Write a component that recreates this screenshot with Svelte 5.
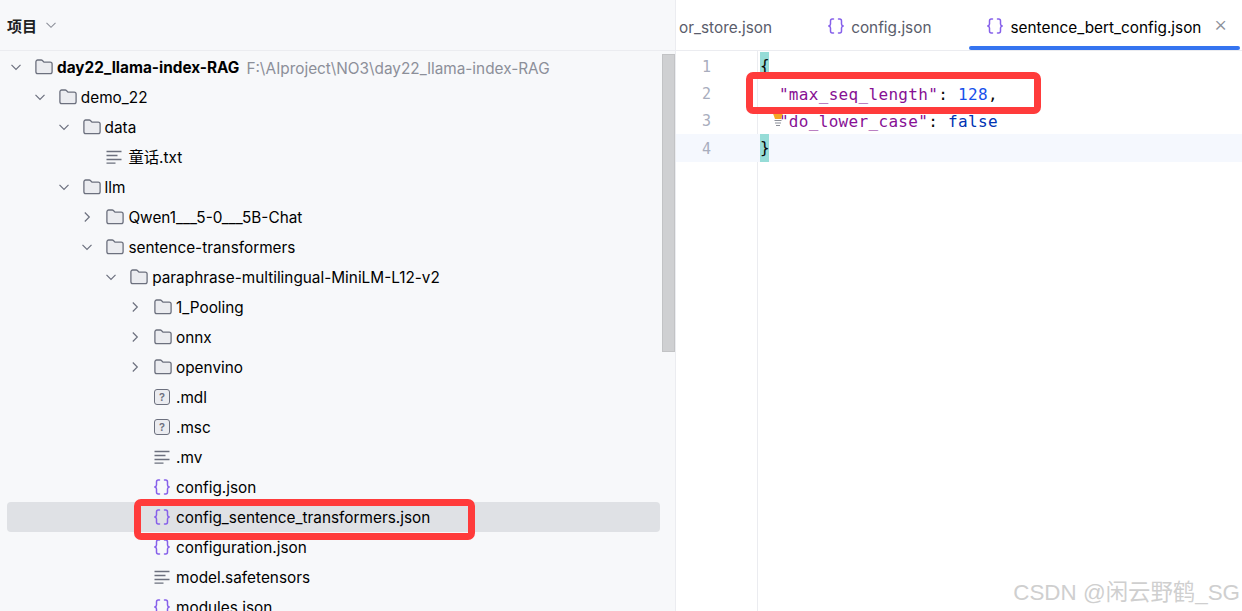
<script>
  const rows = [
    { l: 0, k: 'open', icon: 'folder', t: 'day22_llama-index-RAG', bold: true, hint: 'F:\\AIproject\\NO3\\day22_llama-index-RAG' },
    { l: 1, k: 'open', icon: 'folder', t: 'demo_22' },
    { l: 2, k: 'open', icon: 'folder', t: 'data' },
    { l: 3, icon: 'text', t: '童话.txt' },
    { l: 2, k: 'open', icon: 'folder', t: 'llm' },
    { l: 3, k: 'closed', icon: 'folder', t: 'Qwen1___5-0___5B-Chat' },
    { l: 3, k: 'open', icon: 'folder', t: 'sentence-transformers' },
    { l: 4, k: 'open', icon: 'folder', t: 'paraphrase-multilingual-MiniLM-L12-v2' },
    { l: 5, k: 'closed', icon: 'folder', t: '1_Pooling' },
    { l: 5, k: 'closed', icon: 'folder', t: 'onnx' },
    { l: 5, k: 'closed', icon: 'folder', t: 'openvino' },
    { l: 5, icon: 'unknown', t: '.mdl' },
    { l: 5, icon: 'unknown', t: '.msc' },
    { l: 5, icon: 'text', t: '.mv' },
    { l: 5, icon: 'json', t: 'config.json' },
    { l: 5, icon: 'json', t: 'config_sentence_transformers.json', sel: true },
    { l: 5, icon: 'json', t: 'configuration.json' },
    { l: 5, icon: 'text', t: 'model.safetensors' },
    { l: 5, icon: 'json', t: 'modules.json' }
  ];
</script>

{#snippet braces()}
  <svg class="ico" viewBox="0 0 16 16" fill="none" stroke="#8660ea" stroke-width="1.500" stroke-linecap="round" stroke-linejoin="round">
    <path d="M5.500 1H4.300C3 1 2.500 1.800 2.500 3v3C2.500 7 1.800 7.700.8 8c1 .3 1.700 1 1.700 2v3c0 1.200.5 2 1.800 2h1.200" />
    <path d="M10.500 1h1.200C13 1 13.500 1.800 13.500 3v3c0 1 .7 1.700 1.700 2-1 .3-1.700 1-1.700 2v3c0 1.200-.5 2-1.800 2h-1.200" />
  </svg>
{/snippet}

<div class="app">
  <aside class="side">
    <header class="side-head">
      <span class="title">项目</span>
      <svg class="head-chev" viewBox="0 0 12 12" fill="none" stroke="#8c8f99" stroke-width="1.100"><path d="M1.500 3.800 6 8.300l4.500-4.500" /></svg>
    </header>
    <div class="tree">
      {#each rows as r}
        <div class="row" class:sel={r.sel} style="--l:{r.l}">
          <span class="chev">
            {#if r.k === 'open'}
              <svg viewBox="0 0 12 12" fill="none" stroke="#6c707e" stroke-width="1.200"><path d="M1.500 3.800 6 8.300l4.500-4.500" /></svg>
            {:else if r.k === 'closed'}
              <svg viewBox="0 0 12 12" fill="none" stroke="#6c707e" stroke-width="1.200"><path d="M3.800 1.500 8.300 6l-4.500 4.500" /></svg>
            {/if}
          </span>
          {#if r.icon === 'folder'}
            <svg class="ico folder" viewBox="0 0 18 16" fill="#ebecf0" stroke="#6c707e" stroke-width="1.300"><path d="M.9 3C.9 1.900 1.600 1 2.700 1h3.500c.5 0 .9.200 1.200.5L9 3.200h6.200c1.100 0 1.900.8 1.900 1.900v7.700c0 1.100-.8 1.900-1.900 1.900H2.800C1.700 14.700.9 13.900.9 12.800z" /></svg>
          {:else if r.icon === 'text'}
            <svg class="ico" viewBox="0 0 16 16" fill="none" stroke="#6c707e" stroke-width="1.300"><path d="M.5 2.500h15M.5 6.500h11M.5 10.500h15M.5 14.200h9" /></svg>
          {:else if r.icon === 'unknown'}
            <span class="unk">?</span>
          {:else}
            {@render braces()}
          {/if}
          <span class="name" class:bold={r.bold}>{r.t}</span>
          {#if r.hint}<span class="hint">{r.hint}</span>{/if}
        </div>
      {/each}
    </div>
    <div class="scroll"></div>
  </aside>

  <main class="main">
    <nav class="tabs">
      <div class="tab first">or_store.json</div>
      <div class="tab">{@render braces()}config.json</div>
      <div class="tab active">{@render braces()}sentence_bert_config.json<span class="close">×</span></div>
    </nav>
    <div class="code">
      <div class="line"><span class="no">1</span><span class="src"><span class="brace">{'{'}</span></span></div>
      <div class="line"><span class="no">2</span><span class="src txt">{'  '}<span class="key">"max_seq_length"</span>: <span class="num">128</span>,</span></div>
      <div class="line"><span class="no">3</span><span class="src txt">{'  '}<span class="key">"do_lower_case"</span>: <span class="lit">false</span></span></div>
      <div class="line cur"><span class="no">4</span><span class="src"><span class="brace">{'}'}</span></span></div>
      <svg class="bulb" viewBox="0 0 14 16"><path d="M1.500 0h11l-2.500 7H4z" fill="#f5a623" /><path d="M3.500 8.500h7M4 11h6M5 13.500h4" stroke="#8c8f99" stroke-width="1.200" /></svg>
    </div>
  </main>

  <div class="mark mark-a"></div>
  <div class="mark mark-b"></div>
  <div class="wm">CSDN @闲云野鹤_SG</div>
</div>

<style>
  :global(body) { margin: 0; }
  .app {
    position: relative;
    display: flex;
    width: 1242px;
    height: 611px;
    overflow: hidden;
    background: #fff;
    color: #000;
    font-family: Inter, "Noto Sans CJK SC", sans-serif;
    font-size: 15.350px;
  }
  .side {
    position: relative;
    flex: 0 0 675px;
    background: #f7f8fa;
    border-right: 1px solid #ebecf0;
    overflow: hidden;
  }
  .side-head {
    display: flex;
    align-items: center;
    gap: 8px;
    height: 50px;
    padding-left: 7px;
    border-bottom: 1px solid #ebecf0;
    box-sizing: content-box;
  }
  .title { font-size: 15px; font-weight: 600; color: #1e1f22; }
  .head-chev { width: 12px; height: 12px; }
  .tree { padding-top: 1px; }
  .row {
    display: flex;
    align-items: center;
    height: 30px;
    margin: 0 15px 0 7px;
    padding-left: calc(var(--l) * 23.800px + 3px);
    border-radius: 4px;
    white-space: nowrap;
  }
  .row.sel { background: #dfe1e5; }
  .chev { display: flex; flex: 0 0 12px; width: 12px; height: 12px; margin-right: 13px; }
  .ico { flex: 0 0 auto; width: 16px; height: 16px; margin-right: 6px; }
  .ico.folder { width: 18px; margin-right: 4px; }
  .unk {
    flex: 0 0 auto;
    display: flex;
    align-items: center;
    justify-content: center;
    box-sizing: border-box;
    width: 16px;
    height: 16px;
    margin-right: 6px;
    border: 1.500px solid #6c707e;
    border-radius: 3px;
    background: #ebecf0;
    color: #6c707e;
    font-size: 11px;
    font-weight: 600;
  }
  .name { color: #000; line-height: 20px; height: 20px; margin-top: 2px; }
  .bold { font-weight: 700; }
  .hint { margin-left: 7px; margin-top: 2px; color: #8c8f99; }
  .scroll {
    position: absolute;
    top: 54px;
    right: 0;
    width: 13px;
    height: 298px;
    box-sizing: border-box;
    background: #cfd0d2;
    border: 1px solid #c2c3c5;
  }
  .main { flex: 1; min-width: 0; display: flex; flex-direction: column; }
  .tabs {
    display: flex;
    height: 50px;
    flex: 0 0 50px;
    border-bottom: 1px solid #ebecf0;
    overflow: hidden;
    box-sizing: content-box;
  }
  .tab {
    flex: 0 0 auto;
    position: relative;
    display: flex;
    align-items: center;
    padding: 0 38px 0 17px;
    height: 54px;
    color: #5a5d6b;
    white-space: nowrap;
  }
  .tab.first { padding: 0 39px 0 3px; }
  .tab .ico { width: 16px; height: 16px; margin-right: 7px; margin-top: -3px; }
  .tab.active { color: #000; padding: 0 0 0 18px; width: 271px; box-sizing: border-box; }
  .tab.active::after {
    content: "";
    position: absolute;
    left: 0;
    right: 0;
    top: 46px;
    height: 4px;
    border-radius: 2px;
    background: #3574f0;
  }
  .close { position: absolute; right: 13px; top: 14px; font-size: 21px; font-weight: 300; line-height: 20px; color: #8c8f99; }
  .code {
    position: relative;
    flex: 1;
    padding-top: 1px;
    font-family: "DejaVu Sans Mono", monospace;
    font-size: 16px;
    background: linear-gradient(#ebecf0, #ebecf0) 81px 0 / 1px 100% no-repeat;
  }
  .line { display: flex; align-items: center; height: 27.400px; }
  .line.cur { background: #f5f8fe; }
  .no {
    flex: 0 0 84px;
    box-sizing: border-box;
    padding-right: 49px;
    margin-top: 2px;
    text-align: right;
    color: #a8adbd;
    font-size: 15px;
  }
  .src { white-space: pre; letter-spacing: 0.320px; color: #080808; }
  .src.txt { margin: 2px 0 0 -1px; }
  .brace { display: inline-block; width: 9px; background: #96dcd7; line-height: 27.400px; letter-spacing: 0; }
  .key { color: #871094; }
  .num { color: #1750eb; }
  .lit { color: #0033b3; }
  .bulb { position: absolute; left: 95px; top: 61px; width: 14px; height: 16px; }
  .mark {
    position: absolute;
    box-sizing: border-box;
    border: 7px solid #ff3b3b;
    border-radius: 7px;
  }
  .mark-a { left: 134px; top: 499px; width: 341px; height: 41px; }
  .mark-b { left: 746px; top: 72px; width: 295px; height: 42px; }
  .wm {
    position: absolute;
    right: 2px;
    bottom: 4px;
    font-family: "Liberation Sans", "Noto Sans CJK SC", sans-serif;
    font-size: 22.400px;
    line-height: 28px;
    color: #cfcfcf;
    white-space: nowrap;
  }
</style>
